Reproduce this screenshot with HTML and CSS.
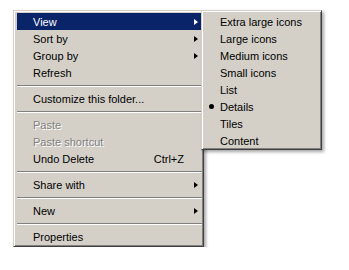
FILE: index.html
```html
<!DOCTYPE html>
<html>

<head>
    <title>Context menu</title>
    <link rel="stylesheet" href="styles.css">
</head>

<body>
    <div class="desktop">
        <!-- Main context menu -->
        <ul class="menu mainMenu">
            <li class="item active"><span class="label">View</span><span class="arrow"></span></li>
            <li class="item"><span class="label">Sort by</span><span class="arrow"></span></li>
            <li class="item"><span class="label">Group by</span><span class="arrow"></span></li>
            <li class="item"><span class="label">Refresh</span></li>
            <li class="separator"></li>
            <li class="item"><span class="label">Customize this folder...</span></li>
            <li class="separator"></li>
            <li class="item disabled"><span class="label">Paste</span></li>
            <li class="item disabled"><span class="label">Paste shortcut</span></li>
            <li class="item"><span class="label">Undo Delete</span><span class="shortcut">Ctrl+Z</span></li>
            <li class="separator"></li>
            <li class="item"><span class="label">Share with</span><span class="arrow"></span></li>
            <li class="separator"></li>
            <li class="item"><span class="label">New</span><span class="arrow"></span></li>
            <li class="separator"></li>
            <li class="item"><span class="label">Properties</span></li>
        </ul>

        <!-- View submenu -->
        <ul class="menu subMenu">
            <li class="item"><span class="label">Extra large icons</span></li>
            <li class="item"><span class="label">Large icons</span></li>
            <li class="item"><span class="label">Medium icons</span></li>
            <li class="item"><span class="label">Small icons</span></li>
            <li class="item"><span class="label">List</span></li>
            <li class="item checked"><span class="label">Details</span></li>
            <li class="item"><span class="label">Tiles</span></li>
            <li class="item"><span class="label">Content</span></li>
        </ul>
    </div>
</body>

</html>
```

FILE: styles.css
```css
body {
    margin: 0;
    background-color: #fff;
    font-family: 'Liberation Sans', Arial, sans-serif;
    font-size: 11px;
    color: #000;
}

.desktop {
    display: flex;
    align-items: flex-start;
    padding: 10px 0 0 13px;
}

/* Classic 3D menu frame */
.menu {
    list-style: none;
    margin: 0;
    padding: 1px;
    background-color: #d4d0c8;
    border-top: 1px solid #d4d0c8;
    border-left: 1px solid #d4d0c8;
    border-right: 1px solid #404040;
    border-bottom: 1px solid #404040;
    box-shadow: inset 1px 1px 0 #fff, inset -1px -1px 0 #808080, 2px 2px 3px rgba(0, 0, 0, 0.35);
}

.mainMenu {
    width: 185px;
    padding: 2px 1px 1px 3px;
}

.subMenu {
    width: 116px;
    margin-left: -3px;
    padding: 2px 1px 0 2px;
}

.item {
    display: flex;
    align-items: center;
    height: 17px;
    padding: 0 4px 0 16px;
    white-space: nowrap;
}

.item .label {
    flex-grow: 1;
}

.item.active {
    background-color: #0a246a;
    color: #fff;
}

.item.disabled {
    color: #808080;
    text-shadow: 1px 1px 0 #fff;
}

.shortcut {
    margin-right: 14px;
}

.arrow {
    width: 0;
    height: 0;
    border-top: 3.5px solid transparent;
    border-bottom: 3.5px solid transparent;
    border-left: 4px solid #000;
}

.item.active .arrow {
    border-left-color: #fff;
}

.checked {
    position: relative;
}

.checked::before {
    content: '';
    position: absolute;
    left: 5px;
    top: 6px;
    width: 5px;
    height: 5px;
    border-radius: 50%;
    background-color: #000;
}

.separator {
    height: 0;
    margin: 4px 0 3px;
    border-top: 1px solid #808080;
    border-bottom: 1px solid #fff;
}
```
